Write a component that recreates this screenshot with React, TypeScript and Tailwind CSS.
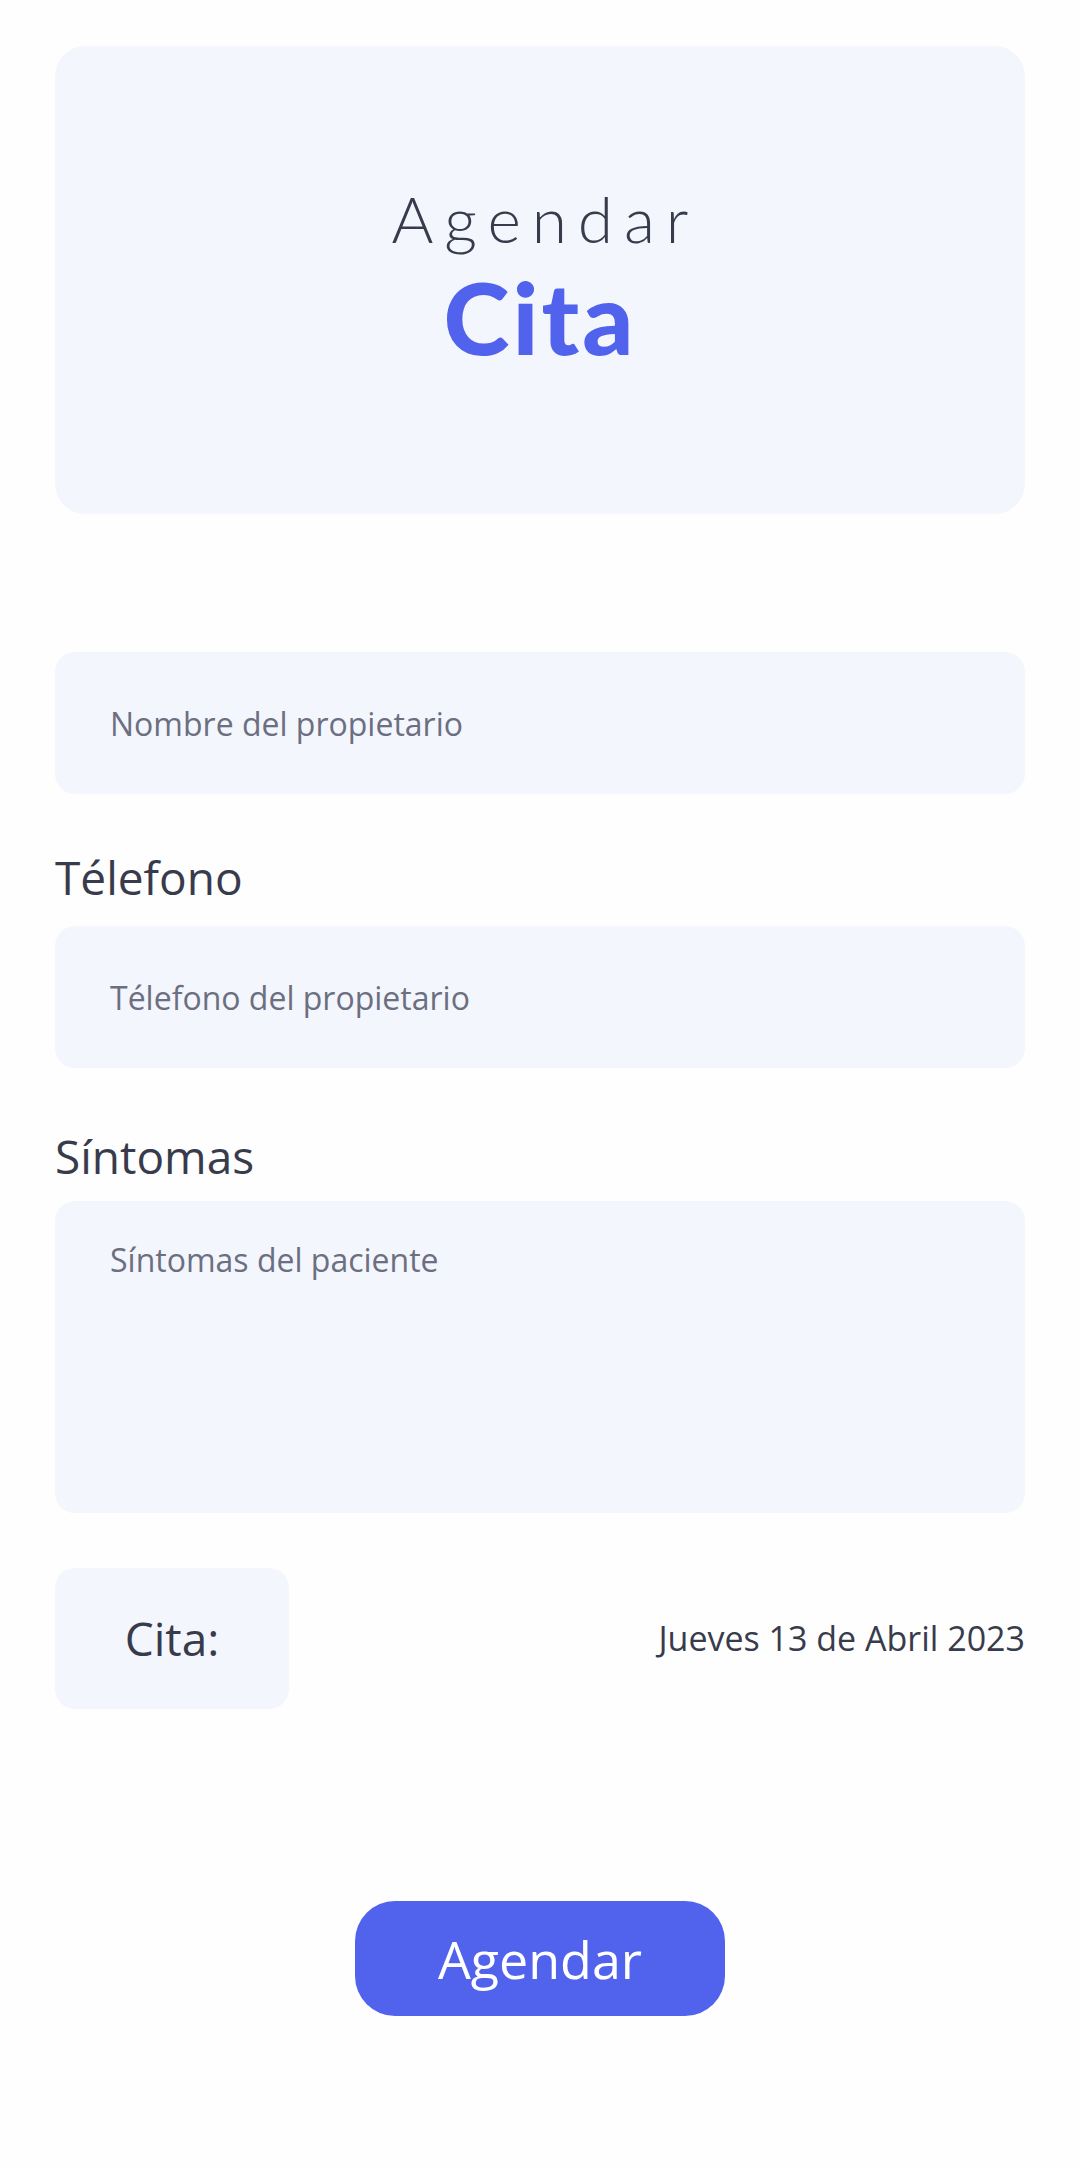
import { useState } from 'react';

export default function App() {
  const [nombre, setNombre] = useState('');
  const [telefono, setTelefono] = useState('');
  const [sintomas, setSintomas] = useState('');

  return (
    <div className="min-h-[2167px] w-full bg-[#fefeff] font-['Open_Sans','Noto_Sans',sans-serif] text-[#383b4b]">
      <div className="flex flex-col px-[55px] pt-[46px]">
        {/* Header card */}
        <div className="flex h-[468px] flex-col items-center justify-center rounded-[30px] bg-[#f4f6fe] pb-[10px]">
          <h1 className="pl-[0.17em] font-['Lato',sans-serif] text-[64px] font-light leading-[1.1] tracking-[0.17em]">Agendar</h1>
          <h2 className="mt-[12px] font-['Lato',sans-serif] text-[100px] font-black leading-[1] tracking-[0.03em] text-[#5162ec]">Cita</h2>
        </div>

        {/* Form */}
        <form className="mt-[138px] flex flex-col" onSubmit={(e) => e.preventDefault()}>
          <input
            value={nombre}
            onChange={(e) => setNombre(e.target.value)}
            placeholder="Nombre del propietario"
            className="h-[142px] w-full rounded-[20px] bg-[#f4f6fe] px-[55px] text-[32px] outline-none placeholder:text-[#6b6f80]"
          />

          <label className="mt-[57px] mb-[22px] text-[46px] leading-[53px]">Télefono</label>
          <input
            value={telefono}
            onChange={(e) => setTelefono(e.target.value)}
            placeholder="Télefono del propietario"
            className="h-[142px] w-full rounded-[20px] bg-[#f4f6fe] px-[55px] text-[32px] outline-none placeholder:text-[#6b6f80]"
          />

          <label className="mt-[62px] mb-[18px] text-[46px] leading-[53px]">Síntomas</label>
          <textarea
            value={sintomas}
            onChange={(e) => setSintomas(e.target.value)}
            placeholder="Síntomas del paciente"
            className="h-[312px] w-full resize-none rounded-[20px] bg-[#f4f6fe] px-[55px] pt-[38px] text-[32px] leading-[42px] outline-none placeholder:text-[#6b6f80]"
          />

          <div className="mt-[55px] flex items-center justify-between">
            <div className="flex h-[141px] w-[234px] items-center justify-center rounded-[20px] bg-[#f4f6fe]">
              <span className="text-[46px]">Cita:</span>
            </div>
            <span className="text-[34px]">Jueves 13 de Abril 2023</span>
          </div>

          <div className="mt-[192px] flex justify-center">
            <button
              type="submit"
              className="h-[115px] w-[370px] rounded-[40px] bg-[#5162ec] text-[52px] text-white"
            >
              Agendar
            </button>
          </div>
        </form>
      </div>
    </div>
  );
}
